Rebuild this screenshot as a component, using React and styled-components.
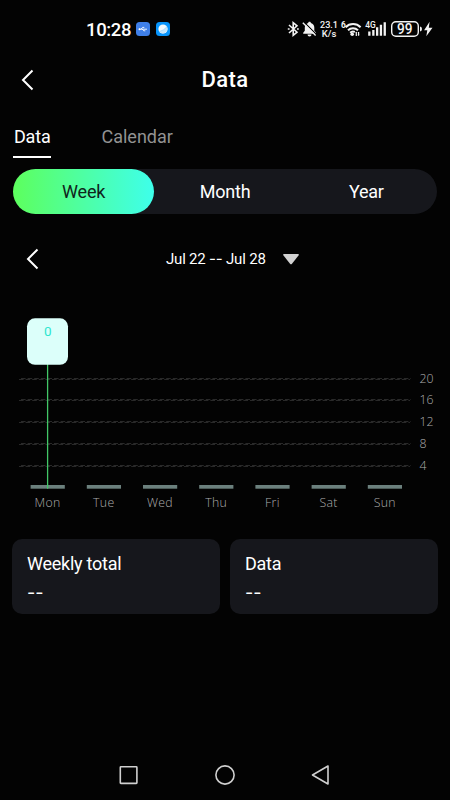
import React, { useState } from 'react';
import styled, { createGlobalStyle } from 'styled-components';

const PANEL = '#16171c';
const MUTED = '#adadad';
const FONT = "Roboto, 'Noto Sans', sans-serif";

const Global = createGlobalStyle`
  * {
    box-sizing: border-box;
  }

  body {
    margin: 0;
    background: #030303;
    color: #fff;
    font-family: ${FONT};
  }

  button {
    border: 0;
    padding: 0;
    background: none;
    color: inherit;
    font-family: inherit;
  }

  svg {
    display: block;
    flex: none;
  }
`;

const Screen = styled.div`
  display: flex;
  flex-direction: column;
  width: 450px;
  height: 800px;
  overflow: hidden;
  background: #030303;
`;

const StatusBar = styled.div`
  display: flex;
  align-items: center;
  height: 58px;
  padding: 0 16px 0 86px;
`;

const Clock = styled.span`
  width: 50px;
  font-size: 18.5px;
  font-weight: 500;
  letter-spacing: -0.35px;
  line-height: 22px;
  padding-top: 1px;
`;

const AppBadges = styled.div`
  display: flex;
  gap: 6px;
`;

const SystemIcons = styled.div`
  margin-left: auto;
`;

const Header = styled.header`
  display: grid;
  grid-template-columns: 60px 1fr 60px;
  align-items: center;
  height: 43px;
  padding-left: 20px;
  padding-right: 20px;
`;

const Title = styled.h1`
  margin: 0;
  font-size: 22px;
  font-weight: 500;
  letter-spacing: 0.45px;
  text-align: center;
`;

const Tabs = styled.nav`
  display: flex;
  gap: 49px;
  height: 68px;
  padding: 23px 13px 0;
`;

const Tab = styled.button`
  height: 34px;
  padding: 1px 1px 7px;
  border-bottom: 2px solid ${({ $active }) => ($active ? '#fff' : 'transparent')};
  color: ${({ $active }) => ($active ? '#fff' : '#929292')};
  font-size: 18px;
  letter-spacing: ${({ $active }) => ($active ? '-0.2px' : '0')};
  line-height: 24px;
`;

const Segment = styled.div`
  display: grid;
  grid-template-columns: repeat(3, 1fr);
  height: 45px;
  margin: 0 13px;
  border-radius: 23px;
  background: ${PANEL};
`;

const SegmentButton = styled.button`
  border-radius: 23px;
  background: ${({ $active }) => ($active ? 'linear-gradient(90deg, #5dff5d, #3effeb)' : 'none')};
  color: ${({ $active }) => ($active ? '#10251c' : '#fff')};
  font-size: 18px;
  letter-spacing: -0.2px;
  line-height: 24px;
  padding-top: 1px;
`;

const DateRow = styled.div`
  display: grid;
  grid-template-columns: 141px 101px 1fr;
  align-items: center;
  height: 44px;
  margin: 23px 0 19px;
  padding-left: 25px;
`;

const DateLabel = styled.span`
  padding-bottom: 1px;
  font-size: 15px;
  letter-spacing: -0.2px;
  white-space: nowrap;
`;

const DropButton = styled.button`
  padding-left: 15px;
`;

const ChartText = styled.text`
  fill: ${MUTED};
  font-family: 'Open Sans', 'Noto Sans', sans-serif;
  font-size: 12.3px;
  font-weight: 300;
`;

const TooltipText = styled.text`
  fill: #2ee6cf;
  font-family: ${FONT};
  font-size: 13.5px;
`;

const Cards = styled.section`
  display: grid;
  grid-template-columns: 1fr 1fr;
  gap: 10px;
  margin: 19px 12px 0;
`;

const Card = styled.div`
  height: 75px;
  padding: 13px 15px;
  border-radius: 10px;
  background: ${PANEL};
  font-size: 18px;
  letter-spacing: -0.25px;
  line-height: 24px;
`;

const CardValue = styled.div`
  margin-top: 5px;
  letter-spacing: 0;
`;

const NavBar = styled.footer`
  display: flex;
  align-items: center;
  justify-content: space-between;
  height: 50px;
  margin-top: auto;
  padding: 0 119px;
`;

const Dashes = styled.span`
  font-family: Inter, sans-serif;
  font-variant-ligatures: none;
`;

const BackIcon = () => (
  <svg width="18" height="24" viewBox="0 0 18 24" fill="none" stroke="#fff" strokeWidth="2">
    <path d="M12.5 2.5 3 12l9.5 9.5" />
  </svg>
);

const UsbBadge = () => (
  <svg width="14" height="14" viewBox="0 0 14 14">
    <rect width="14" height="14" rx="3.5" fill="#3f7fe8" />
    <path d="M3 7.2h8M5 7.2l1.6-1.8h1.7M6.2 7.2l1.6 1.6h1.5" stroke="#fff" strokeWidth="0.9" fill="none" />
    <circle cx="3.5" cy="7.2" r="1" fill="#fff" />
  </svg>
);

const BrowserBadge = () => (
  <svg width="14" height="14" viewBox="0 0 14 14">
    <rect width="14" height="14" rx="3.5" fill="#0794fb" />
    <circle cx="7" cy="7" r="4.6" fill="#f2fbff" />
    <path d="M2.8 9.2Q7.6 8.3 10.8 4.4A4.6 4.6 0 0 1 2.8 9.2Z" fill="#c8e7fc" />
    <path d="M3 9.6Q8 8.5 11.2 4.6" stroke="#8accfa" strokeWidth="0.5" fill="none" />
  </svg>
);

// bluetooth, muted bell, net speed, wifi, mobile signal and battery
const StatusIcons = () => (
  <svg width="148" height="24" viewBox="286 17 148 24" fill="#f3f3f3" fontFamily={FONT}>
    <g fill="none" stroke="#f3f3f3" strokeWidth="1.6">
      <path d="M289 25 297 32.2 293.2 35.4V22.6L297 25.8 289 33" />
      <path d="M287.8 29h1.8M297 29h1.8" />
    </g>

    <path d="M309.5 21.8c.8 0 1.3.5 1.4 1.2 2.2.7 3.4 2.3 3.4 4.6v3.2l1.7 2v1h-12.8v-1l1.6-2v-3.2c0-2.3 1.2-3.9 3.4-4.6.1-.7.5-1.2 1.3-1.2Z" />
    <path d="M307.5 34.5h4a2 2 0 0 1-4 0Z" />
    <path d="m303.8 21.8 13 13" stroke="#030303" strokeWidth="1.2" />
    <path d="m302.8 22.8 12.8 12.8" stroke="#f3f3f3" strokeWidth="1.4" />

    <text x="320" y="27.7" fontSize="9.4" fontWeight="500" textLength="18" lengthAdjust="spacingAndGlyphs">
      23.1
    </text>
    <text x="321.8" y="37" fontSize="9.4" fontWeight="500" textLength="14.5" lengthAdjust="spacingAndGlyphs">
      K/s
    </text>

    <text x="341" y="27.5" fontSize="8.4" fontWeight="700">
      6
    </text>
    <g fill="none" stroke="#f3f3f3" strokeWidth="2">
      <path d="M345.6 27.2a10.6 10.6 0 0 1 15 0" />
      <path d="M348 30.2a7.2 7.2 0 0 1 10 0" />
      <path d="M350.2 32.8a4 4 0 0 1 4.6-.8" />
    </g>
    <circle cx="352.2" cy="34.3" r="1.8" />
    <path d="M355 33l1.3-1.2 1.3 1.2h-.7V36h-1.2V33zM358 32h1.2v2.8h.6l-1.2 1.2-1.2-1.2h.6z" />

    <text x="365.2" y="28" fontSize="9" fontWeight="500" textLength="10.5" lengthAdjust="spacingAndGlyphs">
      4G
    </text>
    <path d="M368.2 31.5h2.3v4.2h-2.3zM372.2 30h2.3v5.7h-2.3zM376 27.2h2.3v8.5H376zM379.8 24.7h2.3v11h-2.3zM383.6 22.2h2.3v13.5h-2.3z" />

    <rect x="391.7" y="21.7" width="26.6" height="14.6" rx="4.2" fill="none" stroke="#f3f3f3" strokeWidth="1.4" />
    <path d="M420 26.5q2 .3 2 2.5t-2 2.5Z" />
    <text x="404.8" y="34" fontSize="14" fontWeight="500" textAnchor="middle" textLength="15.5" lengthAdjust="spacingAndGlyphs">
      99
    </text>
    <path d="m429.6 21.8-5.5 8.4h3.2l-1 6 6.2-8.4h-3.7Z" />
  </svg>
);

const days = ['Mon', 'Tue', 'Wed', 'Thu', 'Fri', 'Sat', 'Sun'];
const ticks = [20, 16, 12, 8, 4];

const WeekChart = () => (
  <svg width="450" height="220" viewBox="0 0 450 220">
    {ticks.map((tick, i) => {
      const y = 78.8 + i * 21.9;
      const row = Math.floor(y + 0.3);

      return (
        <g key={tick}>
          <path d={`M21 ${row - 0.5}H411`} stroke="#292929" strokeDasharray="4.6 2" />
          <path d={`M19 ${row + 0.5}H410`} stroke="#292929" strokeDasharray="4.6 2" />
          <ChartText x="419.5" y={82.6 + i * 21.8}>
            {tick}
          </ChartText>
        </g>
      );
    })}

    {days.map((day, i) => (
      <g key={day}>
        <rect x={30.6 + i * 56.2} y="185" width="34.2" height="3.7" fill="#6b807d" />
        <ChartText x={47.6 + i * 56.2} y="207" textAnchor="middle" letterSpacing="0.3">
          {day}
        </ChartText>
      </g>
    ))}

    <path d="M47.6 64v124.7" stroke="#42c767" strokeWidth="1.3" />
    <rect x="27" y="18.3" width="41" height="46.5" rx="8" fill="#dcfffa" />
    <TooltipText x="47.8" y="36.2" textAnchor="middle">
      0
    </TooltipText>
  </svg>
);

const App = () => {
  const [range, setRange] = useState('Week');
  const [tab, setTab] = useState('Data');

  return (
    <>
      <Global />
      <Screen>
        <StatusBar>
          <Clock>10:28</Clock>
          <AppBadges>
            <UsbBadge />
            <BrowserBadge />
          </AppBadges>
          <SystemIcons>
            <StatusIcons />
          </SystemIcons>
        </StatusBar>

        <Header>
          <button type="button">
            <BackIcon />
          </button>
          <Title>Data</Title>
        </Header>

        <Tabs>
          {['Data', 'Calendar'].map(name => (
            <Tab key={name} $active={tab === name} onClick={() => setTab(name)}>
              {name}
            </Tab>
          ))}
        </Tabs>

        <Segment>
          {['Week', 'Month', 'Year'].map(name => (
            <SegmentButton key={name} $active={range === name} onClick={() => setRange(name)}>
              {name}
            </SegmentButton>
          ))}
        </Segment>

        <DateRow>
          <button type="button">
            <BackIcon />
          </button>
          <DateLabel>
            Jul 22 <Dashes>--</Dashes> Jul 28
          </DateLabel>
          <DropButton type="button">
            <svg width="18" height="12" viewBox="0 0 18 12">
              <path d="M2 1h14q1.5.2.5 1.5L10 10.7q-1 1-2 0L1.5 2.5Q.5 1.2 2 1Z" fill="#d2d2d2" />
            </svg>
          </DropButton>
        </DateRow>

        <WeekChart />

        <Cards>
          {['Weekly total', 'Data'].map(label => (
            <Card key={label}>
              {label}
              <CardValue>
                <Dashes>--</Dashes>
              </CardValue>
            </Card>
          ))}
        </Cards>

        <NavBar>
          <svg width="20" height="20" viewBox="0 0 20 20" fill="none" stroke="#d0d0d0" strokeWidth="1.6">
            <rect x="1.3" y="1.8" width="16.6" height="16.6" rx="0.6" />
          </svg>
          <svg width="20" height="20" viewBox="0 0 20 20" fill="none" stroke="#d0d0d0" strokeWidth="1.6">
            <circle cx="10" cy="10" r="9.1" />
          </svg>
          <svg width="20" height="20" viewBox="0 0 20 20" fill="none" stroke="#d0d0d0" strokeWidth="1.6" strokeLinejoin="round">
            <path d="M17 1v18L1.5 10Z" />
          </svg>
        </NavBar>
      </Screen>
    </>
  );
};

export default App;
